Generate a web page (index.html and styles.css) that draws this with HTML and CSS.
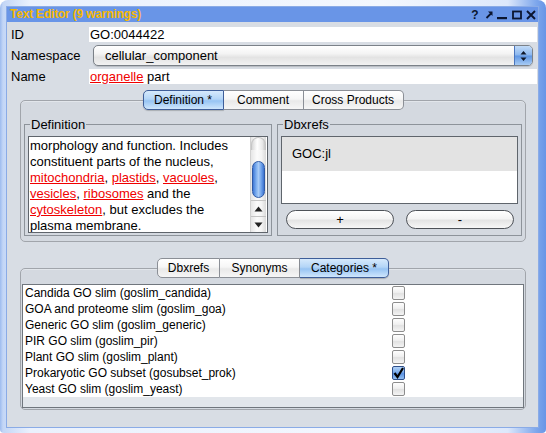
FILE: index.html
```html
<!DOCTYPE html>
<html>
<head>
<meta charset="utf-8">
<title>Text Editor</title>
<link rel="stylesheet" href="styles.css">
</head>
<body>
<div class="frame">
  <div class="window">
    <div class="titlebar">
      <span class="title">Text Editor (9 warnings)</span>
      <div class="ctrls">
        <span class="help">?</span>
        <svg class="ic-arrow" width="8" height="9" viewBox="0 0 8 9"><path d="M1.5 8 L6 3.5" stroke="#0b1530" stroke-width="1.8"/><path d="M3 1.5 H7.5 V6 Z" fill="#0b1530"/></svg>
        <svg class="ic-min" width="10" height="10" viewBox="0 0 10 10"><rect x="0" y="7" width="10" height="2.2" fill="#0b1530"/></svg>
        <svg class="ic-max" width="10" height="10" viewBox="0 0 10 10"><rect x="1" y="1.5" width="8" height="7" fill="none" stroke="#0b1530" stroke-width="1.8"/></svg>
        <svg class="ic-close" width="10" height="10" viewBox="0 0 10 10"><path d="M1 1 L9 9 M9 1 L1 9" stroke="#0b1530" stroke-width="1.9"/></svg>
      </div>
    </div>
    <div class="content">
      <div class="form">
        <span class="lbl">ID</span>
        <div class="field">GO:0044422</div>
        <span class="lbl">Namespace</span>
        <div class="combo">
          <span class="val">cellular_component</span>
          <span class="spin">
            <svg width="7" height="12" viewBox="0 0 7 12"><path d="M3.5 1 L6.5 4.5 H0.5 Z M3.5 11 L6.5 7.5 H0.5 Z" fill="#10182a"/></svg>
          </span>
        </div>
        <span class="lbl">Name</span>
        <div class="field"><span class="link">organelle</span> part</div>
      </div>

      <div class="tabbed t1">
        <div class="tabs">
          <div class="tab sel w-def">Definition *</div>
          <div class="tab w-com">Comment</div>
          <div class="tab w-cp">Cross Products</div>
        </div>
        <div class="panel p1">
          <fieldset class="group">
            <legend>Definition</legend>
            <div class="textarea">
              <div class="text">morphology and function. Includes<br>constituent parts of the nucleus,<br><span class="link">mitochondria</span>, <span class="link">plastids</span>, <span class="link">vacuoles</span>,<br><span class="link">vesicles</span>, <span class="link">ribosomes</span> and the<br><span class="link">cytoskeleton</span>, but excludes the<br>plasma membrane.</div>
              <div class="vscroll">
                <div class="cap"></div>
                <div class="track"><div class="thumb"></div></div>
                <div class="sarrow"><svg width="9" height="6" viewBox="0 0 9 6"><path d="M4.5 0.5 L8.5 5.5 H0.5 Z" fill="#222"/></svg></div>
                <div class="sarrow"><svg width="9" height="6" viewBox="0 0 9 6"><path d="M4.5 5.5 L8.5 0.5 H0.5 Z" fill="#222"/></svg></div>
              </div>
            </div>
          </fieldset>
          <fieldset class="group">
            <legend>Dbxrefs</legend>
            <div class="list"><div class="item">GOC:jl</div></div>
            <div class="btns">
              <button class="pill">+</button>
              <button class="pill">-</button>
            </div>
          </fieldset>
        </div>
      </div>

      <div class="tabbed t2">
        <div class="tabs">
          <div class="tab w-dbx">Dbxrefs</div>
          <div class="tab w-syn">Synonyms</div>
          <div class="tab sel w-cat">Categories *</div>
        </div>
        <div class="panel p2">
          <div class="cats">
            <div class="row"><span>Candida GO slim (goslim_candida)</span><span class="cb"></span></div>
            <div class="row"><span>GOA and proteome slim (goslim_goa)</span><span class="cb"></span></div>
            <div class="row"><span>Generic GO slim (goslim_generic)</span><span class="cb"></span></div>
            <div class="row"><span>PIR GO slim (goslim_pir)</span><span class="cb"></span></div>
            <div class="row"><span>Plant GO slim (goslim_plant)</span><span class="cb"></span></div>
            <div class="row"><span>Prokaryotic GO subset (gosubset_prok)</span><span class="cb on"><svg width="11" height="12" viewBox="0 0 11 12"><path d="M1.5 6 L4.5 10 L10 1" fill="none" stroke="#000" stroke-width="2.2"/></svg></span></div>
            <div class="row"><span>Yeast GO slim (goslim_yeast)</span><span class="cb"></span></div>
          </div>
        </div>
      </div>
    </div>
  </div>
</div>
</body>
</html>
```

FILE: styles.css
```css
* { box-sizing: border-box; }
html, body { margin: 0; padding: 0; }
body {
  font-family: "Liberation Sans", Arial, sans-serif;
  font-size: 13px;
  color: #000;
  background: #ffffff;
}
.frame {
  width: 546px;
  height: 433px;
  padding: 6px 7px 5px 6px;
  border-radius: 8px 8px 4px 4px;
  background: linear-gradient(to right, #9dbbee 0px, #c3d6f6 3px, #eaf1fd 30px, #f3f7fe 70%, #dde8fb 93%, #7ea7ec 98.2%, #6895e6 100%);
}
.window {
  height: 100%;
  display: flex;
  flex-direction: column;
  background: #d8dde4;
  border: 1px solid #8aabe6;
}
.titlebar {
  height: 15px;
  flex: none;
  background: #6995e7;
  display: flex;
  align-items: center;
  padding: 0 2px 0 3px;
}
.title {
  flex: 1;
  font-size: 12px;
  font-weight: bold;
  color: #f7b800;
  line-height: 15px;
  letter-spacing: -0.2px;
}
.ctrls {
  display: flex;
  align-items: center;
  height: 15px;
}
.help {
  width: 8px;
  font-size: 12px;
  font-weight: bold;
  color: #0b1530;
  line-height: 12px;
  margin-right: 6px;
  text-align: center;
}
.ic-arrow { margin-right: 4px; }
.ic-min { margin-right: 5px; }
.ic-max { margin-right: 4px; }

.content {
  flex: 1;
  display: flex;
  flex-direction: column;
}

/* form */
.form {
  display: grid;
  grid-template-columns: 78px 1fr;
  row-gap: 2px;
  align-items: center;
  padding: 5px 1px 0 4px;
}
.lbl { font-size: 13px; line-height: 15px; }
.field {
  height: 15px;
  line-height: 15px;
  background: #fff;
  padding-left: 1px;
  white-space: nowrap;
}
.link {
  color: #f00000;
  text-decoration: underline;
}
.combo {
  height: 21px;
  margin: 1px 4px 1px 4px;
  border: 1px solid #7b8188;
  border-radius: 5px;
  overflow: hidden;
  display: flex;
  align-items: center;
  background: linear-gradient(#ffffff, #f4f4f4 40%, #e3e3e3 60%, #f2f2f2);
  box-shadow: 0 1px 1px rgba(0,0,0,0.15);
}
.combo .val {
  flex: 1;
  padding-left: 11px;
  line-height: 19px;
}
.spin {
  width: 18px;
  height: 100%;
  border-left: 1px solid #4a75bd;
  background: linear-gradient(#c1dbf8, #8ab6ee 48%, #5e95e3 52%, #a7cbf4);
  display: flex;
  align-items: center;
  justify-content: center;
}

/* tabs */
.t1 { margin: 6px 12px 0 13px; }
.t2 { margin: 16px 12px 0 13px; }
.tabs {
  display: flex;
  justify-content: center;
  position: relative;
  z-index: 1;
  margin-bottom: -10px;
}
.tab {
  height: 20px;
  line-height: 18px;
  font-size: 12px;
  text-align: center;
  border: 1px solid #8b8f96;
  border-left: none;
  background: linear-gradient(#ffffff, #f6f6f6 45%, #e9e9e9 55%, #f6f6f6);
  white-space: nowrap;
}
.tab:first-child { border-left: 1px solid #8b8f96; border-radius: 5px 0 0 5px; }
.tab:last-child { border-radius: 0 5px 5px 0; }
.tab.sel {
  background: linear-gradient(#d6e9fc, #b3d5f7 45%, #97c4f3 55%, #cfe6fc);
  border-color: #3e5e99;
  box-shadow: 0 1px 1px rgba(0,0,0,0.2);
}
.tab.sel:first-child { border-left-color: #3e5e99; }
.w-def { width: 81px; }
.w-com { width: 80px; }
.w-cp { width: 100px; }
.w-dbx { width: 63px; }
.w-syn { width: 80px; }
.w-cat { width: 89px; }

.panel {
  border: 1px solid #a1a5ab;
  border-radius: 5px;
  background: #d4d9e0;
  box-shadow: inset 0 1px 0 #e2e6eb;
}
.p1 {
  display: grid;
  grid-template-columns: 248px 245px;
  column-gap: 5px;
  padding: 16px 3px 5px 3px;
}
.group {
  margin: 0;
  min-width: 0;
  border: 1px solid #8d939a;
  padding: 4px 3px 2px 3px;
}
.group legend {
  font-size: 13px;
  line-height: 15px;
  padding: 0 1px;
  margin-left: 2px;
}
.textarea {
  height: 97px;
  border: 1px solid #5f656c;
  background: #fff;
  display: flex;
}
.text {
  flex: 1;
  padding: 1px 0 0 1px;
  line-height: 16px;
  white-space: nowrap;
  overflow: hidden;
}
.vscroll {
  width: 16px;
  margin-right: 1px;
  display: flex;
  flex-direction: column;
  background: linear-gradient(to right, #e6e6e6, #fbfbfb 40%, #f4f4f4 70%, #dadada);
  border-left: 1px solid #d0d0d0;
}
.cap {
  height: 13px;
  border-radius: 8px 8px 0 0;
  background: linear-gradient(to right, #d8d8d8, #ffffff 40%, #e8e8e8 80%, #c8c8c8);
  border: 1px solid #c6c6c6;
  border-bottom: none;
}
.track {
  flex: 1;
  padding-top: 11px;
}
.thumb {
  width: 13px;
  height: 37px;
  margin: 0 auto;
  border: 1px solid #2f5aa6;
  border-radius: 7px;
  background: linear-gradient(to right, #3f78d6, #7fb0f0 30%, #a8cbf6 50%, #6fa2ea 75%, #3c72d0);
}
.sarrow {
  height: 16px;
  border-top: 1px solid #c4c4c4;
  display: flex;
  align-items: center;
  justify-content: center;
}

.list {
  height: 68px;
  border: 1px solid #5f656c;
  background: #fff;
}
.item {
  height: 34px;
  line-height: 34px;
  background: #e3e3e3;
  padding-left: 10px;
}
.btns {
  display: grid;
  grid-template-columns: 108px 108px;
  column-gap: 12px;
  padding: 6px 4px 4px 5px;
}
.pill {
  height: 19px;
  margin: 0;
  padding: 0;
  border: 1px solid #4e5258;
  border-radius: 10px;
  background: linear-gradient(#ffffff, #f4f4f4 45%, #e4e4e4 55%, #f7f7f7);
  font-family: "Liberation Sans", Arial, sans-serif;
  font-size: 13px;
  line-height: 16px;
  color: #000;
}

.p2 {
  padding: 15px 1px 1px 1px;
}
.cats {
  height: 124px;
  border: 1px solid #70767d;
  background: #e2e6eb;
}
.row {
  height: 16px;
  display: grid;
  grid-template-columns: 1fr 1fr;
  align-items: center;
  background: #fff;
  font-size: 12px;
  line-height: 16px;
}
.row span:first-child { padding-left: 2px; white-space: nowrap; }
.cb {
  justify-self: center;
  width: 13px;
  height: 14px;
  border: 1px solid #8d8d8d;
  border-radius: 2px;
  background: linear-gradient(#fefefe, #f0f0f0 45%, #e2e2e2 55%, #f4f4f4);
  display: flex;
  align-items: center;
  justify-content: center;
}
.cb.on {
  border-color: #2e4f8b;
  background: linear-gradient(#b3d3f7, #78aaeb 45%, #5a92e3 55%, #93c0f2);
}
```
